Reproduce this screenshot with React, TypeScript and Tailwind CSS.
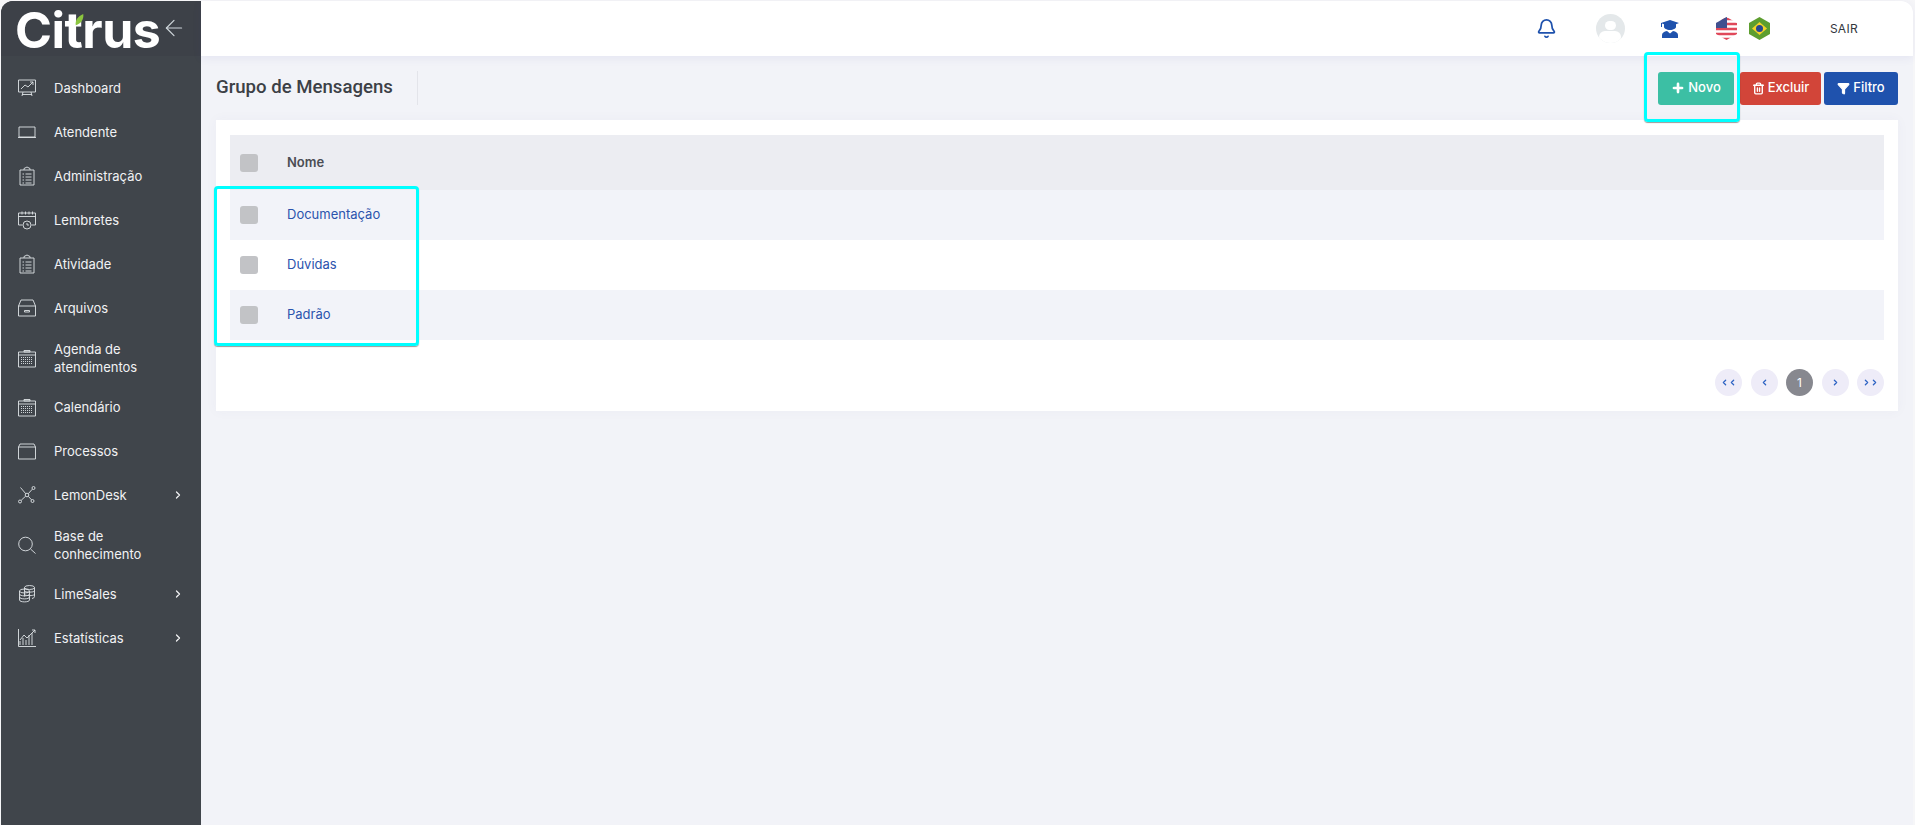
import { ChevronRight, ChevronLeft, ArrowLeft, Plus, Trash2, Filter, Bell } from "lucide-react";
import type { ReactNode } from "react";

const body = "font-['Inter','Liberation_Sans',sans-serif]";

function Ico({ children }: { children: ReactNode }) {
  return (
    <svg viewBox="0 0 20 20" className="w-5 h-5 shrink-0" fill="none" stroke="#dfe3e6" strokeWidth={0.9}>
      {children}
    </svg>
  );
}

const clipboard = (
  <Ico>
    <path d="M3 4h4V2.500L10 1l3 1.500V4h4v15H3z" />
    <path d="M7 4h6M5.500 8h1.500M8.500 8h6M5.500 11h1.500M8.500 11h6M5.500 14h1.500M8.500 14h6M5.500 17h1.500M8.500 17h6" />
  </Ico>
);
const calendar = (
  <Ico>
    <path d="M1.500 4h17v15h-17zM1.500 7h17M7 2.500h6V4H7z" />
    <path d="M4 9.500h12M4 11.500h12M4 13.500h12M4 15.500h12" strokeDasharray="1 1" />
  </Ico>
);

const items: { label: ReactNode; icon: ReactNode; tall?: boolean; arrow?: boolean }[] = [
  {
    label: "Dashboard",
    icon: (
      <Ico>
        <path d="M1.500 2h17v12h-17zM4 11l4-4 3 2 5-5M13 4h3v3M6 14l-1 4M14 14l1 4M5 16.500h10" />
      </Ico>
    ),
  },
  {
    label: "Atendente",
    icon: (
      <Ico>
        <path d="M2 5h16v10H2zM1 15.500h18" />
      </Ico>
    ),
  },
  { label: "Administração", icon: clipboard },
  {
    label: "Lembretes",
    icon: (
      <Ico>
        <path d="M1.500 3h17v12h-4M5.500 15h-4V3M1.500 6.500h17M5 1.500v3M8.500 1.500v3M12 1.500v3M15.500 1.500v3" />
        <circle cx="10" cy="15" r="4" />
        <path d="M10 13v2h2" />
      </Ico>
    ),
  },
  { label: "Atividade", icon: clipboard },
  {
    label: "Arquivos",
    icon: (
      <Ico>
        <path d="M1.500 8 4 2h12l2.500 6v10h-17zM1.500 8h17M7.500 12.500h5v1.500h-5z" />
      </Ico>
    ),
  },
  { label: "Agenda de atendimentos", icon: calendar, tall: true },
  { label: "Calendário", icon: calendar },
  {
    label: "Processos",
    icon: (
      <Ico>
        <path d="M1.500 6h17v12h-17zM1.500 6 3 3h14l1.500 3" />
      </Ico>
    ),
  },
  {
    label: "LemonDesk",
    arrow: true,
    icon: (
      <Ico>
        <circle cx="16.500" cy="3" r="1.500" />
        <circle cx="3" cy="16.500" r="1.500" />
        <circle cx="15.500" cy="16" r="1.500" />
        <circle cx="10" cy="10" r="1.800" />
        <path d="M15.300 4.200 11.300 8.700M4.200 15.300l4.500-4.200M11.300 11.300l3.200 3.500M8.800 8.800 3.500 2.500" />
      </Ico>
    ),
  },
  {
    label: "Base de conhecimento",
    tall: true,
    icon: (
      <Ico>
        <circle cx="8.500" cy="9" r="6.800" />
        <path d="m13.500 14 5 4.500" />
      </Ico>
    ),
  },
  {
    label: "LimeSales",
    arrow: true,
    icon: (
      <Ico>
        <ellipse cx="12.500" cy="3.500" rx="5" ry="2" />
        <path d="M7.500 3.500v9M17.500 3.500v9c0 1-1 1.700-2.500 2M7.500 7c1 1.500 9 1.500 10 0M7.500 10.500c1 1.500 9 1.500 10 0" />
        <ellipse cx="7.500" cy="7" rx="5" ry="2" />
        <path d="M2.500 7v9c0 2.500 10 2.500 10 0V7M2.500 10c0 2.500 10 2.500 10 0M2.500 13c0 2.500 10 2.500 10 0" />
      </Ico>
    ),
  },
  {
    label: "Estatísticas",
    arrow: true,
    icon: (
      <Ico>
        <path d="M1.500 1v17.500H19M3 17v-4M6 17v-7M9 17v-5M12 17V7M15 17V5M3 12l4-5 3 3 8-8M15 2h3v3" />
      </Ico>
    ),
  },
];

function Sidebar() {
  return (
    <aside className="w-[200px] shrink-0 bg-[#40454b] rounded-tl-xl text-[#f1f2f4]">
      <div className="h-[55px] flex items-center pl-[14px] bg-[#3d4148] rounded-tl-xl">
        <div className="relative w-[145px] pt-[3px] font-bold tracking-[-0.5px] text-[50px] leading-[52px] text-white">
          Citrus
          <svg viewBox="0 0 12 16" className="absolute left-[59px] top-[13px] w-[11px] h-[12px]">
            <path d="M1 15C0 8 4 3 11 0c1 7-3 13-10 15z" fill="#8cc63f" />
          </svg>
        </div>
        <ArrowLeft className="w-[26px] h-[26px] ml-[1px] -mt-[2px] text-[#cfd6db]" strokeWidth={1.1} />
      </div>
      <nav className="mt-[10px] text-[13px]">
        {items.map((it, i) => (
          <div key={i} className={`flex items-center pl-[16px] pr-[17px] ${it.tall ? "h-[55px]" : "h-[44px]"}`}>
            {it.icon}
            <span className={`ml-[17px] leading-[18px] ${it.tall ? "w-[110px]" : ""}`}>{it.label}</span>
            {it.arrow && <ChevronRight className="w-3 h-3 ml-auto" strokeWidth={2.500} />}
          </div>
        ))}
      </nav>
    </aside>
  );
}

function Header() {
  return (
    <header className="h-[55px] bg-white rounded-tr-xl flex items-center justify-end shadow-[0_2px_10px_rgba(70,70,160,0.08)]">
      <Bell className="w-[21px] h-[21px] text-[#1f52ad] mr-[39px]" strokeWidth={2} />
      <div className="w-[29px] h-[29px] rounded-full bg-[#e4e8ea] overflow-hidden flex flex-col items-center mr-[35px]">
        <span className="w-[11px] h-[11px] rounded-full bg-white mt-[7px]" />
        <span className="w-[22px] h-[14px] rounded-full bg-white mt-[1px]" />
      </div>
      <svg viewBox="0 0 20 20" className="w-5 h-5 mr-[36px]" fill="#1f52ad">
        <path d="M10 1 19 4l-3 1.200V8c0 1-2.500 3-6 3S4 9 4 8V5.200L2 4.500V8H1V4z" />
        <path d="M2 19v-3c0-2 2-3.500 5-4l3 2.500 3-2.500c3 .5 5 2 5 4v3z" />
      </svg>
      <svg viewBox="0 0 21 23" className="w-[21px] h-[23px] mr-[12px]">
        <clipPath id="hex-us">
          <path d="M10.500 0 21 6v11l-10.500 6L0 17V6z" />
        </clipPath>
        <g clipPath="url(#hex-us)">
          <rect width="21" height="23" fill="#fff" />
          <path d="M0 2h21M0 7h21M0 12h21M0 17h21M0 22h21" stroke="#e0485a" strokeWidth="2.500" />
          <rect width="11" height="11" fill="#41508f" />
        </g>
      </svg>
      <svg viewBox="0 0 21 23" className="w-[21px] h-[23px] mr-[60px]">
        <path d="M10.500 0 21 6v11l-10.500 6L0 17V6z" fill="#5d9e2f" />
        <path d="M10.500 5 18 11.500l-7.500 6.500L3 11.500z" fill="#f5d327" />
        <circle cx="10.500" cy="11.500" r="3.500" fill="#27478f" />
      </svg>
      <span className="text-[12px] text-[#33373d] mr-[55px] tracking-[0.3px]">SAIR</span>
    </header>
  );
}

function Check() {
  return <span className="w-[18px] h-[18px] rounded-[3px] bg-[#c2c3c6] shrink-0" />;
}

const rows = ["Documentação", "Dúvidas", "Padrão"];

function PageBtn({ children, active }: { children: ReactNode; active?: boolean }) {
  return (
    <span
      className={`w-[27px] h-[27px] rounded-full flex items-center justify-center text-[12px] ${
        active ? "bg-[#87888f] text-white" : "bg-[#eeecf8] text-[#2e64c4]"
      }`}
    >
      {children}
    </span>
  );
}

export default function App() {
  return (
    <div className={`relative w-[1915px] h-[825px] overflow-hidden flex pl-px pt-px pr-[2px] bg-[#f6f6f8] ${body}`}>
      <Sidebar />
      <div className="flex-1 min-w-0 bg-[#f2f3f8] rounded-tr-xl">
        <Header />
        <main className="pl-[15px] pr-[15px]">
          <div className="h-[64px] flex items-center">
            <div className="h-[34px] w-[202px] border-r border-[#e3e4ea] flex items-center">
              <h1 className="font-['Roboto',sans-serif] font-medium text-[18.600px] text-[#3c4046]">Grupo de Mensagens</h1>
            </div>
            <div className="ml-auto flex text-[13px] text-white font-medium">
              <button className="w-[76px] h-[33px] rounded-[3px] bg-[#3cbfa4] flex items-center justify-center gap-[3px]">
                <Plus className="w-[14px] h-[14px]" strokeWidth={4.500} />
                Novo
              </button>
              <button className="ml-[6px] w-[81px] h-[33px] rounded-[3px] bg-[#d24539] flex items-center justify-center gap-[3px]">
                <Trash2 className="w-[13px] h-[13px]" strokeWidth={2.500} />
                Excluir
              </button>
              <button className="ml-[3px] w-[74px] h-[33px] rounded-[3px] bg-[#1f52ad] flex items-center justify-center gap-[3px]">
                <Filter className="w-[13px] h-[13px]" fill="currentColor" />
                Filtro
              </button>
            </div>
          </div>
          <section className="h-[291px] bg-white px-[14px] pt-[15px] shadow-[0_0_12px_rgba(70,70,140,0.04)]">
            <div className="h-[55px] bg-[#ecedf2] flex items-center pl-[10px]">
              <Check />
              <span className="ml-[29px] text-[13px] font-semibold text-[#4b4e54]">Nome</span>
            </div>
            {rows.map((r, i) => (
              <div key={r} className={`h-[50px] flex items-center pl-[10px] ${i % 2 === 0 ? "bg-[#f2f3f9]" : "bg-white"}`}>
                <Check />
                <span className="ml-[29px] text-[13px] text-[#2b53ad]">{r}</span>
              </div>
            ))}
            <div className="flex justify-end gap-[8.500px] mt-[29px]">
              <PageBtn>
                <ChevronLeft className="w-[9px] h-[9px]" strokeWidth={3.500} />
                <ChevronLeft className="w-[9px] h-[9px] -ml-px" strokeWidth={3.500} />
              </PageBtn>
              <PageBtn>
                <ChevronLeft className="w-[9px] h-[9px]" strokeWidth={3.500} />
              </PageBtn>
              <PageBtn active>1</PageBtn>
              <PageBtn>
                <ChevronRight className="w-[9px] h-[9px]" strokeWidth={3.500} />
              </PageBtn>
              <PageBtn>
                <ChevronRight className="w-[9px] h-[9px]" strokeWidth={3.500} />
                <ChevronRight className="w-[9px] h-[9px] -ml-px" strokeWidth={3.500} />
              </PageBtn>
            </div>
          </section>
        </main>
      </div>
      {/* highlight boxes drawn over the screenshot */}
      <div className="absolute left-[1644px] top-[52px] w-[96px] h-[70px] border-[3px] border-[#0ff] rounded-[4px] shadow-[0_1px_1px_rgba(0,0,0,0.4)]" />
      <div className="absolute left-[214px] top-[186px] w-[205px] h-[160px] border-[3px] border-[#0ff] rounded-[4px] shadow-[0_1px_1px_rgba(0,0,0,0.4)]" />
    </div>
  );
}
